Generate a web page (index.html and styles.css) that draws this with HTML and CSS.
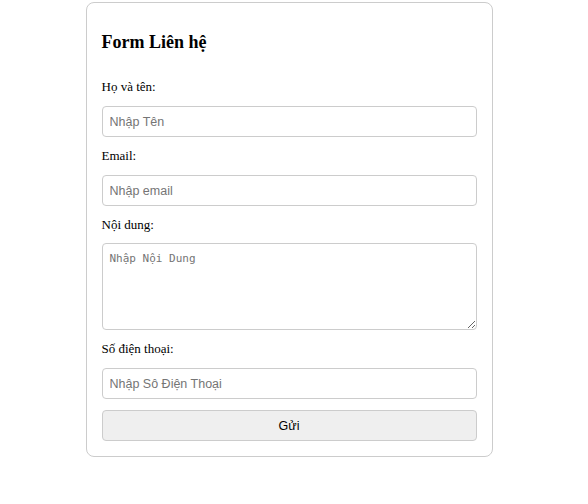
FILE: index.html
```html
<!DOCTYPE html>
<html lang="vi">
<head>
<meta charset="utf-8">
<title>Form Liên hệ</title>
<link rel="stylesheet" href="styles.css">
</head>
<body>
<div class="form-container">
  <h2 class="title">Form Liên hệ</h2>
  <form class="form">
    <label class="label" for="name">Họ và tên:</label>
    <input class="field" id="name" type="text" placeholder="Nhập Tên">
    <label class="label" for="email">Email:</label>
    <input class="field" id="email" type="email" placeholder="Nhập email">
    <label class="label label-tight" for="content">Nội dung:</label>
    <textarea class="field area" id="content" placeholder="Nhập Nội Dung"></textarea>
    <label class="label" for="phone">Số điện thoại:</label>
    <input class="field" id="phone" type="text" placeholder="Nhập Sô Điện Thoại">
    <button class="submit" type="button">Gửi</button>
  </form>
</div>
</body>
</html>
```

FILE: styles.css
```css
html, body {
  margin: 0;
  padding: 0;
  background: #fff;
}
body {
  padding: 2px 10px 0 0;
  font-family: "Liberation Serif", "Times New Roman", serif;
  color: #000;
}
.form-container {
  box-sizing: border-box;
  width: 407px;
  margin: 0 auto;
  padding: 15px;
  border: 1px solid #ccc;
  border-radius: 8px;
}
.title {
  margin: 13px 0 24px;
  font-size: 18px;
  line-height: 23px;
  font-weight: bold;
}
.form {
  display: flex;
  flex-direction: column;
}
.label {
  display: block;
  font-size: 13px;
  line-height: 18px;
  margin-bottom: 10px;
}
.label-tight {
  margin-bottom: 9px;
}
.field {
  box-sizing: border-box;
  width: 100%;
  height: 31px;
  margin: 0 0 10px;
  padding: 0 7px;
  border: 1px solid #ccc;
  border-radius: 4px;
  font-family: "Liberation Sans", Arial, sans-serif;
  font-size: 12.5px;
  color: #333;
  background: #fff;
}
.field::placeholder {
  color: #757575;
}
.area {
  height: 87px;
  padding: 8px 7px;
  font-family: "DejaVu Sans Mono", monospace;
  font-size: 11px;
  resize: vertical;
}
.submit {
  box-sizing: border-box;
  width: 100%;
  height: 31px;
  margin-top: 1px;
  border: 1px solid #ccc;
  border-radius: 4px;
  background: #efefef;
  font-family: "Liberation Sans", Arial, sans-serif;
  font-size: 12.5px;
  color: #000;
}
```
